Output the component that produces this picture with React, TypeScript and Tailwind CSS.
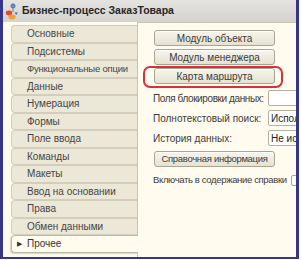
import React from "react";

const tabs = [
  "Основные",
  "Подсистемы",
  "Функциональные опции",
  "Данные",
  "Нумерация",
  "Формы",
  "Поле ввода",
  "Команды",
  "Макеты",
  "Ввод на основании",
  "Права",
  "Обмен данными",
];

function ProcessIcon() {
  return (
    <svg width="14" height="17" viewBox="0 0 14 17">
      <circle cx="8" cy="3" r="2.2" fill="#6a8fc8" stroke="#3d5f9a" strokeWidth="0.6" />
      <path d="M8 5.5 V9" stroke="#777" strokeWidth="1" />
      <ellipse cx="4" cy="10" rx="3.2" ry="2.4" fill="#e04a2a" />
      <ellipse cx="7" cy="14" rx="3.6" ry="2.4" fill="#f0a030" />
      <path d="M9.5 9.5 L13 9.5 L11.2 12 Z" fill="#3d6fc0" />
    </svg>
  );
}

function Button({ label, small }: { label: string; small?: boolean }) {
  return (
    <div
      className={
        "flex h-[16px] w-[121px] items-center justify-center whitespace-nowrap rounded-[3px] border border-[#a9a593] bg-gradient-to-b from-[#f7f5ec] to-[#e6e2d2] text-[#3b3b3b] shadow-[inset_0_1px_0_#ffffff] " +
        (small ? "text-[9.5px] tracking-[-0.3px]" : "text-[10px]")
      }
    >
      {label}
    </div>
  );
}

function FieldRow({ label, value, tight }: { label: string; value: string; tight?: boolean }) {
  return (
    <div className="flex h-[20px] items-center">
      <span
        className={
          "w-[115px] shrink-0 whitespace-nowrap text-[10px] text-[#3b3b3b] " +
          (tight ? "tracking-[-0.4px]" : "")
        }
      >
        {label}
      </span>
      <div className="flex h-[16px] w-[60px] shrink-0 items-center overflow-hidden whitespace-nowrap rounded-[2px] border border-[#b5b09c] bg-white pl-[2px] text-[10px] text-[#222]">
        {value}
      </div>
    </div>
  );
}

export default function App() {
  return (
    <div className="h-[260px] w-[302px] bg-white" style={{ fontFamily: '"Liberation Sans", Arial, sans-serif' }}>
      <div className="flex h-[259px] w-[299px] flex-col border-x-[3px] border-b-[2px] border-[#35358a]">
        <div className="flex h-[22px] items-center gap-[3px] bg-gradient-to-b from-[#e4e3e0] to-[#d5d3ce] pl-[2px]">
          <ProcessIcon />
          <span className="text-[10.5px] font-bold text-[#262626]">Бизнес-процесс ЗаказТовара</span>
        </div>
        <div className="flex min-h-0 flex-1 bg-[#fffcef]">
          <div className="relative z-10 flex w-[134px] shrink-0 flex-col pl-[8px] pt-[3px]">
            {tabs.map((t) => (
              <div
                key={t}
                className={
                  "flex h-[17.5px] items-center whitespace-nowrap rounded-l-[4px] border border-r-0 border-[#d3cebb] bg-[#ece8d8] pl-[15px] text-[#454545] " +
                  (t === "Функциональные опции" ? "text-[9.5px] tracking-[-0.2px]" : "text-[10px]")
                }
              >
                {t}
              </div>
            ))}
            <div className="mr-[-1px] flex h-[17.5px] items-center gap-[5px] rounded-l-[4px] border border-r-0 border-[#bfbaa5] bg-[#fffcef] pl-[5px] text-[10px] text-[#333] shadow-[-1px_1px_1px_#d8d3c0]">
              <span className="text-[7px] text-[#333]">▶</span>
              <span>Прочее</span>
            </div>
          </div>
          <div className="flex min-w-0 flex-1 flex-col overflow-hidden border-l border-t border-[#c9c4b0] pl-[15px] pt-[7px]">
            <div className="flex flex-col gap-[3px] pl-[1px]">
              <Button label="Модуль объекта" />
              <Button label="Модуль менеджера" />
              <div className="relative">
                <Button label="Карта маршрута" />
                <div className="absolute left-[-11px] top-[-2px] h-[22px] w-[140px] rounded-[7px] border-[2px] border-[#d8313b]" />
              </div>
            </div>
            <div className="mt-[4px] flex flex-col">
              <FieldRow label="Поля блокировки данных:" value="" tight />
              <FieldRow label="Полнотекстовый поиск:" value="Использовать" />
              <FieldRow label="История данных:" value="Не использовать" />
            </div>
            <div className="mt-[3px] pl-[1px]">
              <Button label="Справочная информация" small />
            </div>
            <div className="mt-[5px] flex h-[16px] items-center whitespace-nowrap">
              <span className="text-[9.5px] tracking-[-0.35px] text-[#3b3b3b]">Включать в содержание справки</span>
              <div className="ml-[4px] h-[11px] w-[11px] shrink-0 rounded-[2px] border border-[#a9a593] bg-white" />
            </div>
          </div>
        </div>
      </div>
    </div>
  );
}
